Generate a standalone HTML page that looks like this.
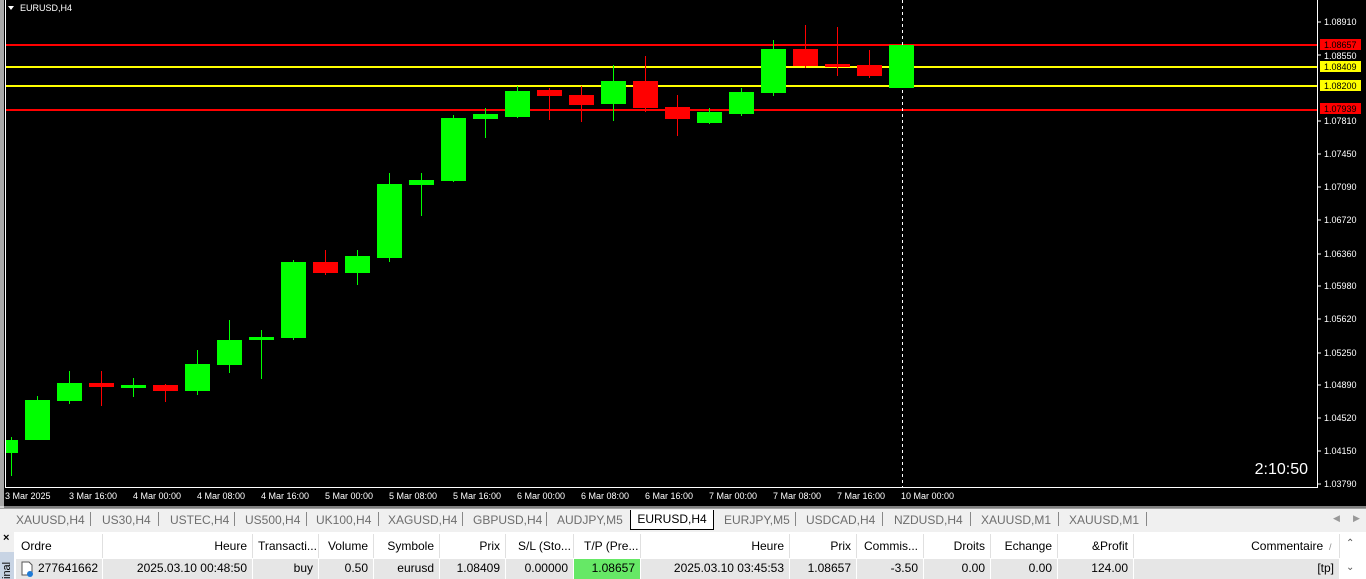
<!DOCTYPE html>
<html><head><meta charset="utf-8"><style>
*{margin:0;padding:0;box-sizing:border-box}
body{width:1366px;height:579px;overflow:hidden;background:#f0f0f0;font-family:"Liberation Sans",sans-serif;position:relative}
#chart{position:absolute;left:0;top:0}
.tabs{position:absolute;left:0;top:508px;width:1366px;height:22px;background:#f0f0f0;border-top:1px solid #a0a0a0;font-size:12px;color:#6d6d6d}
.tab{position:absolute;top:4px}
.sep{position:absolute;top:3px;width:1px;height:14px;background:#888}
.act{position:absolute;left:630px;top:1px;width:84px;height:20px;background:#fff;border:1px solid #000;border-top:none;color:#000;text-align:center;line-height:18px}
.tbl{position:absolute;left:0;top:532px;width:1366px;height:47px;background:#fff;font-size:12px;color:#000}
.side{position:absolute;left:0;top:0;width:14px;height:47px;background:#f0f0f0}
.c{position:absolute;height:24px;line-height:24px;white-space:nowrap;overflow:hidden;border-right:1px solid #e0e0e0;padding:0 5px}
.h{top:2px}
.r{top:27px;height:20px;line-height:19px;background:#e6e6e6;border-right:1px solid #fff}
.ra{text-align:right}
</style></head><body>
<svg id="chart" width="1366" height="508" xmlns="http://www.w3.org/2000/svg" font-family="Liberation Sans, sans-serif">
<rect x="0" y="0" width="1366" height="508" fill="#000"/>
<rect x="0" y="0" width="4" height="508" fill="#a8a8a8"/>
<line x1="5.5" y1="0" x2="5.5" y2="488" stroke="#fff"/>
<line x1="5" y1="487.5" x2="1318" y2="487.5" stroke="#fff"/>
<line x1="1317.5" y1="0" x2="1317.5" y2="488" stroke="#fff"/>
<path d="M8 6 L14 6 L11 10 Z" fill="#fff"/>
<text x="20" y="11" font-size="9" fill="#fff">EURUSD,H4</text>
<line x1="6" y1="45" x2="1317" y2="45" stroke="#f00" stroke-width="2"/>
<line x1="6" y1="67" x2="1317" y2="67" stroke="#ff0" stroke-width="2"/>
<line x1="6" y1="86" x2="1317" y2="86" stroke="#ff0" stroke-width="2"/>
<line x1="6" y1="110" x2="1317" y2="110" stroke="#f00" stroke-width="2"/>
<line x1="902.5" y1="0" x2="902.5" y2="487" stroke="#fff" stroke-dasharray="3,3"/>
<g id="c"></g>
<g fill="#fff" font-size="9">
<text x="1324" y="25">1.08910</text>
<text x="1324" y="59">1.08550</text>
<text x="1324" y="124">1.07810</text>
<text x="1324" y="157">1.07450</text>
<text x="1324" y="190">1.07090</text>
<text x="1324" y="223">1.06720</text>
<text x="1324" y="257">1.06360</text>
<text x="1324" y="289">1.05980</text>
<text x="1324" y="322">1.05620</text>
<text x="1324" y="356">1.05250</text>
<text x="1324" y="388">1.04890</text>
<text x="1324" y="421">1.04520</text>
<text x="1324" y="454">1.04150</text>
<text x="1324" y="487">1.03790</text>
</g>
<g stroke="#fff">
<line x1="1318" y1="22" x2="1321" y2="22"/><line x1="1318" y1="55" x2="1321" y2="55"/><line x1="1318" y1="121" x2="1321" y2="121"/><line x1="1318" y1="154" x2="1321" y2="154"/><line x1="1318" y1="187" x2="1321" y2="187"/><line x1="1318" y1="220" x2="1321" y2="220"/><line x1="1318" y1="254" x2="1321" y2="254"/><line x1="1318" y1="286" x2="1321" y2="286"/><line x1="1318" y1="319" x2="1321" y2="319"/><line x1="1318" y1="353" x2="1321" y2="353"/><line x1="1318" y1="385" x2="1321" y2="385"/><line x1="1318" y1="418" x2="1321" y2="418"/><line x1="1318" y1="451" x2="1321" y2="451"/><line x1="1318" y1="484" x2="1321" y2="484"/>
</g>
<rect x="1320" y="39" width="41" height="11" fill="#f00"/><text x="1324" y="48" font-size="9" fill="#000">1.08657</text>
<rect x="1320" y="61" width="41" height="11" fill="#ff0"/><text x="1324" y="70" font-size="9" fill="#000">1.08409</text>
<rect x="1320" y="80" width="41" height="11" fill="#ff0"/><text x="1324" y="89" font-size="9" fill="#000">1.08200</text>
<rect x="1320" y="103" width="41" height="11" fill="#f00"/><text x="1324" y="112" font-size="9" fill="#000">1.07939</text>
<g fill="#fff" font-size="9">
<text x="5" y="499">3 Mar 2025</text><text x="69" y="499">3 Mar 16:00</text><text x="133" y="499">4 Mar 00:00</text><text x="197" y="499">4 Mar 08:00</text><text x="261" y="499">4 Mar 16:00</text><text x="325" y="499">5 Mar 00:00</text><text x="389" y="499">5 Mar 08:00</text><text x="453" y="499">5 Mar 16:00</text><text x="517" y="499">6 Mar 00:00</text><text x="581" y="499">6 Mar 08:00</text><text x="645" y="499">6 Mar 16:00</text><text x="709" y="499">7 Mar 00:00</text><text x="773" y="499">7 Mar 08:00</text><text x="837" y="499">7 Mar 16:00</text><text x="901" y="499">10 Mar 00:00</text>
</g>
<text x="1308" y="474" font-size="16" fill="#fff" text-anchor="end">2:10:50</text>
<line x1="0" y1="507" x2="1366" y2="507" stroke="#fff"/>
</svg>
<script>
var d=[[11,440,453,437,476,1],[37,400,440,396,440,1],[69,383,401,371,404,1],[101,383,387,371,406,0],[133,385,388,378,397,1],[165,385,391,384,402,0],[197,364,391,350,395,1],[229,340,365,320,373,1],[261,337,340,330,379,1],[293,262,338,260,340,1],[325,262,273,250,275,0],[357,256,273,250,285,1],[389,184,258,173,262,1],[421,180,185,173,216,1],[453,118,181,115,182,1],[485,114,119,108,138,1],[517,91,117,86,118,1],[549,90,96,88,120,0],[581,95,105,86,122,0],[613,81,104,65,121,1],[645,81,108,56,112,0],[677,107,119,95,136,0],[709,112,123,108,124,1],[741,92,114,88,116,1],[773,49,93,40,96,1],[805,49,66,25,68,0],[837,64,67,27,76,0],[869,65,76,50,78,0],[901,45,88,45,88,1]];
var s='';d.forEach(function(c){var col=c[5]?'#0f0':'#f00';var x0=c[0]-12;var w=25;if(c[0]==11){x0=6;w=12;}s+='<line x1="'+(c[0]+0.5)+'" y1="'+c[3]+'" x2="'+(c[0]+0.5)+'" y2="'+c[4]+'" stroke="'+col+'"/><rect x="'+x0+'" y="'+c[1]+'" width="'+w+'" height="'+Math.max(c[2]-c[1],3)+'" fill="'+col+'"/>';});
document.getElementById('c').innerHTML=s;
</script>
<div class="tabs">
<span class="tab" style="left:16px">XAUUSD,H4</span><span class="sep" style="left:90px"></span>
<span class="tab" style="left:102px">US30,H4</span><span class="sep" style="left:158px"></span>
<span class="tab" style="left:170px">USTEC,H4</span><span class="sep" style="left:234px"></span>
<span class="tab" style="left:245px">US500,H4</span><span class="sep" style="left:306px"></span>
<span class="tab" style="left:316px">UK100,H4</span><span class="sep" style="left:378px"></span>
<span class="tab" style="left:388px">XAGUSD,H4</span><span class="sep" style="left:462px"></span>
<span class="tab" style="left:473px">GBPUSD,H4</span><span class="sep" style="left:546px"></span>
<span class="tab" style="left:557px">AUDJPY,M5</span>
<span class="act">EURUSD,H4</span>
<span class="tab" style="left:724px">EURJPY,M5</span><span class="sep" style="left:795px"></span>
<span class="tab" style="left:806px">USDCAD,H4</span><span class="sep" style="left:882px"></span>
<span class="tab" style="left:894px">NZDUSD,H4</span><span class="sep" style="left:970px"></span>
<span class="tab" style="left:981px">XAUUSD,M1</span><span class="sep" style="left:1058px"></span>
<span class="tab" style="left:1069px">XAUUSD,M1</span><span class="sep" style="left:1146px"></span>
<span class="tab" style="left:1333px;font-size:9px;color:#999">◀</span><span class="tab" style="left:1353px;font-size:9px;color:#999">▶</span>
</div>
<div class="tbl">
<div class="side"><span style="position:absolute;left:3px;top:0;font-size:11px;font-weight:bold">×</span><div style="position:absolute;left:0;top:20px;width:14px;height:27px;background:#c8d4e4;font-size:11px;color:#000;writing-mode:vertical-rl;transform:rotate(180deg);text-align:left;line-height:14px">inal</div></div>
<div class="c h" style="left:16px;width:87px">Ordre</div>
<div class="c h ra" style="left:103px;width:150px">Heure</div>
<div class="c h" style="left:253px;width:66px">Transacti...</div>
<div class="c h ra" style="left:319px;width:55px">Volume</div>
<div class="c h ra" style="left:374px;width:66px">Symbole</div>
<div class="c h ra" style="left:440px;width:66px">Prix</div>
<div class="c h" style="left:506px;width:68px;padding-left:12px">S/L (Sto...</div>
<div class="c h" style="left:574px;width:67px;padding-left:10px">T/P (Pre...</div>
<div class="c h ra" style="left:641px;width:149px">Heure</div>
<div class="c h ra" style="left:790px;width:67px">Prix</div>
<div class="c h ra" style="left:857px;width:67px">Commis...</div>
<div class="c h ra" style="left:924px;width:67px">Droits</div>
<div class="c h ra" style="left:991px;width:67px">Echange</div>
<div class="c h ra" style="left:1058px;width:76px">&amp;Profit</div>
<div class="c h ra" style="left:1134px;width:206px">Commentaire <span style="color:#888;font-size:9px">&nbsp;/&nbsp;</span></div>
<div style="position:absolute;left:1346px;top:6px;font-size:10px;color:#555">⌃</div>
<div class="c r" style="left:16px;width:87px;padding-left:22px"><svg style="position:absolute;left:4px;top:2px" width="14" height="16"><path d="M2 1h7l3 3v10H2z" fill="#fff" stroke="#555"/><circle cx="10" cy="13" r="3" fill="#1e7ad6"/></svg>277641662</div>
<div class="c r ra" style="left:103px;width:150px">2025.03.10 00:48:50</div>
<div class="c r ra" style="left:253px;width:66px">buy</div>
<div class="c r ra" style="left:319px;width:55px">0.50</div>
<div class="c r ra" style="left:374px;width:66px">eurusd</div>
<div class="c r ra" style="left:440px;width:66px">1.08409</div>
<div class="c r ra" style="left:506px;width:68px">0.00000</div>
<div class="c r ra" style="left:574px;width:67px;background:#66e866">1.08657</div>
<div class="c r ra" style="left:641px;width:149px">2025.03.10 03:45:53</div>
<div class="c r ra" style="left:790px;width:67px">1.08657</div>
<div class="c r ra" style="left:857px;width:67px">-3.50</div>
<div class="c r ra" style="left:924px;width:67px">0.00</div>
<div class="c r ra" style="left:991px;width:67px">0.00</div>
<div class="c r ra" style="left:1058px;width:76px">124.00</div>
<div class="c r ra" style="left:1134px;width:206px">[tp]</div>
<div style="position:absolute;left:1346px;top:30px;font-size:10px;color:#555">⌄</div>
</div>
</body></html>
